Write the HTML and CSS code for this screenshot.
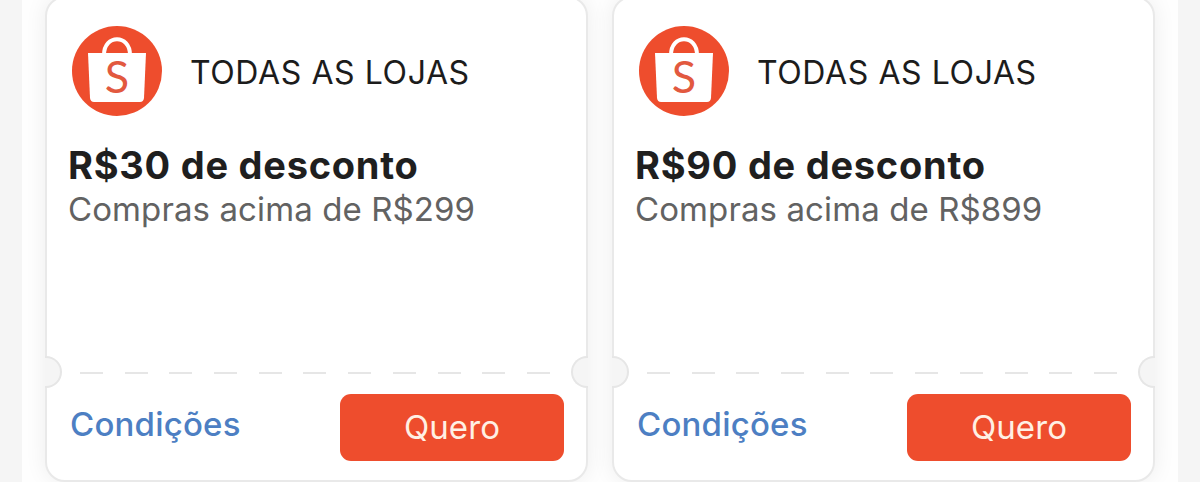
FILE: index.html
```html
<!DOCTYPE html>
<html lang="pt-BR">

<head>
    <meta charset="UTF-8">
    <meta name="viewport" content="width=device-width, initial-scale=1.0">
    <title>Cupons</title>
    <link rel="stylesheet" href="styles.css">
</head>

<body>

    <div class="coupons">

        <div class="coupon">
            <div class="store">
                <svg class="logo" viewBox="0 0 90 90">
                    <circle cx="45" cy="45" r="45" fill="#ee4d2d" />
                    <path d="M32 29C32 8 58 8 58 29" fill="none" stroke="#fff" stroke-width="4" />
                    <path d="M16 27H74L72 72Q71.500 76 68 76H22Q18.500 76 18 72Z" fill="#fff" />
                    <text x="45" y="66.500" class="logo_s">S</text>
                </svg>
                <div class="store_name">TODAS AS LOJAS</div>
            </div>
            <h2>R$30 de desconto</h2>
            <p>Compras acima de R$299</p>
            <div class="line"></div>
            <div class="bottom">
                <a class="cond" href="#">Condições</a>
                <button>Quero</button>
            </div>
            <div class="notch left"></div>
            <div class="notch right"></div>
        </div>

        <div class="coupon">
            <div class="store">
                <svg class="logo" viewBox="0 0 90 90">
                    <circle cx="45" cy="45" r="45" fill="#ee4d2d" />
                    <path d="M32 29C32 8 58 8 58 29" fill="none" stroke="#fff" stroke-width="4" />
                    <path d="M16 27H74L72 72Q71.500 76 68 76H22Q18.500 76 18 72Z" fill="#fff" />
                    <text x="45" y="66.500" class="logo_s">S</text>
                </svg>
                <div class="store_name">TODAS AS LOJAS</div>
            </div>
            <h2>R$90 de desconto</h2>
            <p>Compras acima de R$899</p>
            <div class="line"></div>
            <div class="bottom">
                <a class="cond" href="#">Condições</a>
                <button>Quero</button>
            </div>
            <div class="notch left"></div>
            <div class="notch right"></div>
        </div>

    </div>

</body>

</html>
```
FILE: styles.css
```css
body {
    background-color: #f5f5f5;
    margin: 0;
    font-family: Inter, 'Liberation Sans', sans-serif;
    overflow: hidden;
}

.coupons {
    display: flex;
    gap: 24px;
    box-sizing: border-box;
    width: 1156px;
    height: 482px;
    margin: 0 auto;
    padding: 0 23px;
    background-color: #fefefe;
    overflow: hidden;
}

.coupon {
    position: relative;
    box-sizing: border-box;
    flex: 1;
    height: 486px;
    margin-top: -4px;
    padding: 28px 22px 0 21px;
    background-color: #fff;
    border: 2px solid #e9e9e9;
    border-radius: 20px;
    box-shadow: 0 0 22px rgba(0, 0, 0, 0.07);
}

.store {
    display: flex;
    align-items: center;
    gap: 28px;
    padding-left: 4px;
}

.logo {
    width: 90px;
    height: 90px;
}

.logo_s {
    font-family: Lato, sans-serif;
    font-size: 45px;
    font-weight: 400;
    text-anchor: middle;
    fill: #e2593f;
}

.store_name {
    font-size: 32px;
    line-height: 40px;
    letter-spacing: 0.6px;
    padding-top: 3px;
    color: #1c1c1c;
    white-space: nowrap;
}

h2 {
    margin: 25px 0 0 0;
    font-size: 38px;
    line-height: 48px;
    font-weight: 700;
    letter-spacing: 0.75px;
    color: #1f1f1f;
    white-space: nowrap;
}

p {
    margin: 0;
    font-size: 33px;
    line-height: 40px;
    letter-spacing: 0.1px;
    color: #626262;
    white-space: nowrap;
}

.line {
    height: 2px;
    width: 470px;
    margin: 143px 0 0 12px;
    background: repeating-linear-gradient(to right, #e6e6e6 0 23px, transparent 23px 44.7px);
}

.bottom {
    display: flex;
    justify-content: space-between;
    align-items: center;
    margin-top: 20px;
    padding-left: 2px;
}

.cond {
    font-size: 33px;
    line-height: 40px;
    font-weight: 500;
    letter-spacing: 0.2px;
    padding-bottom: 7px;
    color: #4d7fc3;
    text-decoration: none;
}

button {
    width: 224px;
    height: 67px;
    padding: 0 0 1px 0;
    border: none;
    border-radius: 11px;
    background-color: #ee4d2d;
    color: #fff0e4;
    font-family: inherit;
    font-size: 33px;
    letter-spacing: 0.1px;
    cursor: pointer;
}

.notch {
    position: absolute;
    top: 358px;
    box-sizing: border-box;
    width: 17px;
    height: 32px;
    background-color: #f5f5f5;
    border: 2px solid #e6e6e6;
}

.left {
    left: -2px;
    border-left: none;
    border-radius: 0 16px 16px 0;
}

.right {
    right: -2px;
    border-right: none;
    border-radius: 16px 0 0 16px;
}
```
